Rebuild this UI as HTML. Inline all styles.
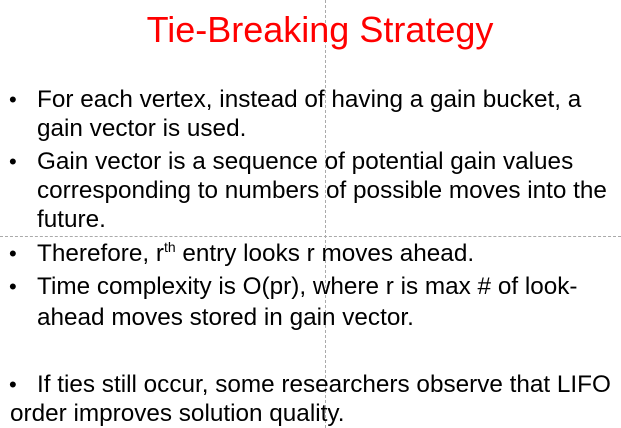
<!DOCTYPE html>
<html><head><meta charset="utf-8"><style>
html,body{margin:0;padding:0;background:#fff;}
body{width:621px;height:428px;position:relative;overflow:hidden;font-family:"Liberation Sans",Arial,sans-serif;}
.t{position:absolute;left:0;width:640px;text-align:center;top:9px;font-size:36px;color:#f00;line-height:42px;}
.l{position:absolute;font-size:24.3px;line-height:24px;color:#000;white-space:nowrap;}
.b{position:absolute;left:9px;font-size:22px;line-height:24px;}
.vd{position:absolute;left:325px;top:0;height:428px;border-left:1px dashed #aaa;}
.hd{position:absolute;top:236px;left:0;width:621px;border-top:1px dashed #aaa;}
sup{font-size:14px;vertical-align:9px;line-height:0;}
</style></head><body>
<div class="vd"></div><div class="hd"></div>
<div class="t">Tie-Breaking Strategy</div>
<div class="b" style="top:88px">•</div>
<div class="l" style="left:37px;top:88px">For each vertex, instead of having a gain bucket, a</div>
<div class="l" style="left:37px;top:117px">gain vector is used.</div>
<div class="b" style="top:150px">•</div>
<div class="l" style="left:37px;top:150px">Gain vector is a sequence of potential gain values</div>
<div class="l" style="left:37px;top:179px">corresponding to numbers of possible moves into the</div>
<div class="l" style="left:37px;top:208px">future.</div>
<div class="b" style="top:242px">•</div>
<div class="l" style="left:37px;top:242px">Therefore, r<sup>th</sup> entry looks r moves ahead.</div>
<div class="b" style="top:275px">•</div>
<div class="l" style="left:37px;top:275px">Time complexity is O(pr), where r is max # of look-</div>
<div class="l" style="left:37px;top:306px">ahead moves stored in gain vector.</div>
<div class="b" style="top:373px">•</div>
<div class="l" style="left:37px;top:373px">If ties still occur, some researchers observe that LIFO</div>
<div class="l" style="left:10px;top:402px">order improves solution quality.</div>
</body></html>
